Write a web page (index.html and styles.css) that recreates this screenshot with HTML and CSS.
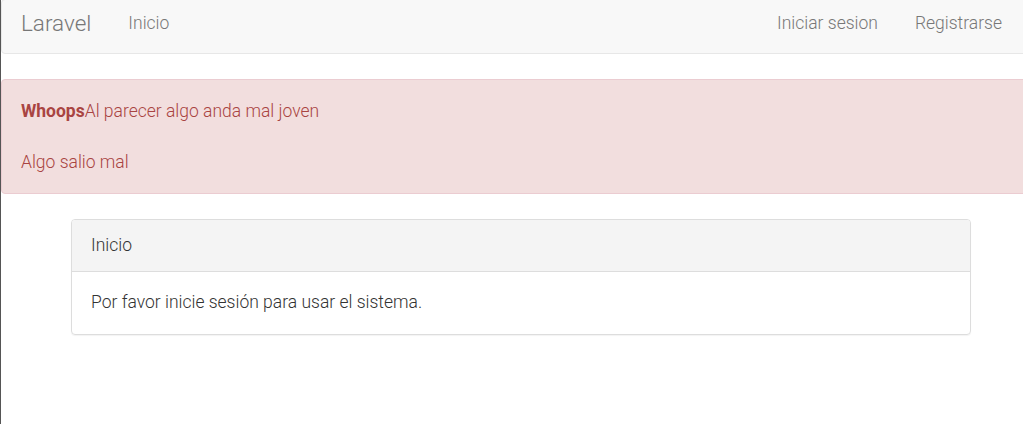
FILE: index.html
```html
<!DOCTYPE html>
<html lang="es">
<head>
<meta charset="utf-8">
<title>Laravel</title>
<link rel="stylesheet" href="styles.css">
</head>
<body>
<div class="frame">
  <nav class="navbar">
    <div class="nav-left">
      <a class="brand" href="#">Laravel</a>
      <a class="nav-link" href="#">Inicio</a>
    </div>
    <div class="nav-right">
      <a class="nav-link" href="#">Iniciar sesion</a>
      <a class="nav-link" href="#">Registrarse</a>
    </div>
  </nav>
  <div class="alert">
    <div class="alert-line"><strong>Whoops</strong>Al parecer algo anda mal joven</div>
    <div class="alert-line alert-second">Algo salio mal</div>
  </div>
  <div class="panel">
    <div class="panel-heading">Inicio</div>
    <div class="panel-body">Por favor inicie sesión para usar el sistema.</div>
  </div>
</div>
</body>
</html>
```
FILE: styles.css
```css
html, body {
  margin: 0;
  padding: 0;
  overflow: hidden;
  background: #ffffff;
}
body {
  font-family: Roboto, "Liberation Sans", sans-serif;
  font-size: 17.5px;
  font-weight: 300;
  line-height: 26px;
  color: #636b6f;
  width: 1023px;
  height: 425px;
}
.frame {
  border-left: 1px solid #555555;
  height: 425px;
  box-sizing: border-box;
  width: 1060px;
}
.navbar {
  display: flex;
  justify-content: space-between;
  align-items: center;
  height: 45px;
  padding-bottom: 8px;
  margin-top: -1px;
  background: #f8f8f8;
  border: 1px solid #e7e7e7;
  border-radius: 4px;
  margin-bottom: 25px;
  box-sizing: content-box;
}
.nav-left, .nav-right {
  display: flex;
  align-items: center;
}
.nav-right {
  padding-right: 57px;
}
a {
  text-decoration: none;
}
.brand {
  font-size: 22.5px;
  color: #777777;
  padding: 0 37px 0 19px;
}
.nav-link {
  color: #777777;
  font-size: 17.5px;
}
.nav-right .nav-link + .nav-link {
  margin-left: 37px;
}
.alert {
  background: #f2dede;
  border: 1px solid #ebccd1;
  border-radius: 4px;
  color: #a94442;
  padding: 18px 20px 18px 19px;
  margin-bottom: 25px;
}
.alert strong {
  font-weight: 700;
}
.alert-second {
  margin-top: 25px;
}
.panel {
  width: 900px;
  margin-left: 70px;
  box-sizing: border-box;
  border: 1px solid #dddddd;
  border-radius: 4px;
  box-shadow: 0 1px 1px rgba(0,0,0,0.05);
}
.panel-heading {
  background: #f4f4f4;
  border-bottom: 1px solid #dddddd;
  border-radius: 3px 3px 0 0;
  padding: 12px 19px 13px;
  color: #333333;
}
.panel-body {
  padding: 17px 19px 19px;
  color: #333333;
}
```
